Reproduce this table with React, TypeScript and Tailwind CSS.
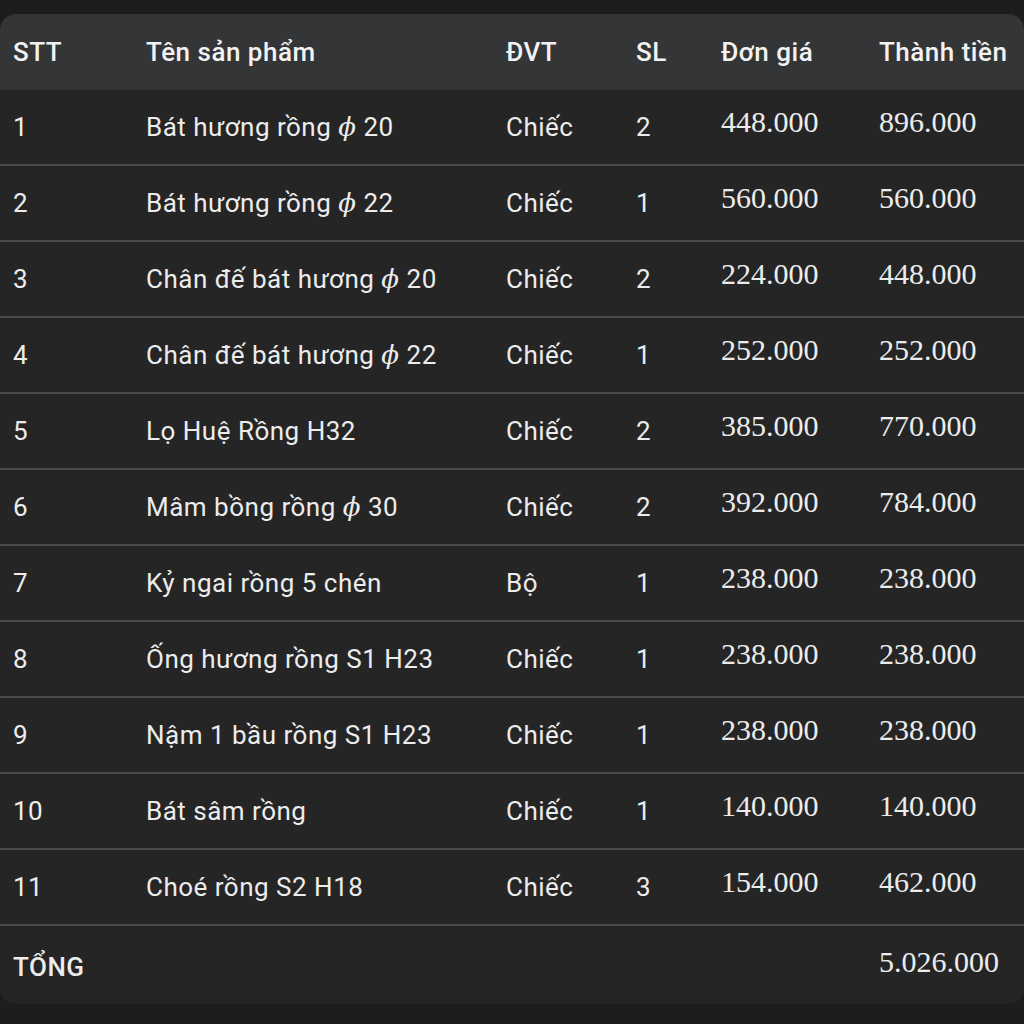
const ROWS = [
  { stt: "1", name: ["Bát hương rồng ", "ϕ", " 20"], unit: "Chiếc", qty: "2", price: "448.000", total: "896.000" },
  { stt: "2", name: ["Bát hương rồng ", "ϕ", " 22"], unit: "Chiếc", qty: "1", price: "560.000", total: "560.000" },
  { stt: "3", name: ["Chân đế bát hương ", "ϕ", " 20"], unit: "Chiếc", qty: "2", price: "224.000", total: "448.000" },
  { stt: "4", name: ["Chân đế bát hương ", "ϕ", " 22"], unit: "Chiếc", qty: "1", price: "252.000", total: "252.000" },
  { stt: "5", name: ["Lọ Huệ Rồng H32"], unit: "Chiếc", qty: "2", price: "385.000", total: "770.000" },
  { stt: "6", name: ["Mâm bồng rồng ", "ϕ", " 30"], unit: "Chiếc", qty: "2", price: "392.000", total: "784.000" },
  { stt: "7", name: ["Kỷ ngai rồng 5 chén"], unit: "Bộ", qty: "1", price: "238.000", total: "238.000" },
  { stt: "8", name: ["Ống hương rồng S1 H23"], unit: "Chiếc", qty: "1", price: "238.000", total: "238.000" },
  { stt: "9", name: ["Nậm 1 bầu rồng S1 H23"], unit: "Chiếc", qty: "1", price: "238.000", total: "238.000" },
  { stt: "10", name: ["Bát sâm rồng"], unit: "Chiếc", qty: "1", price: "140.000", total: "140.000" },
  { stt: "11", name: ["Choé rồng S2 H18"], unit: "Chiếc", qty: "3", price: "154.000", total: "462.000" },
];

const GRID = "grid grid-cols-[133px_360px_130px_85px_158px_1fr] items-center pl-[13px]";
const SERIF = "font-['Liberation_Serif',serif] text-[30px] tracking-normal mb-[12px]";

function Name({ parts }: { parts: string[] }) {
  return (
    <span>
      {parts.map((p, i) =>
        p === "ϕ" ? (
          <span key={i} className="font-['DejaVu_Serif',serif] italic">
            ϕ
          </span>
        ) : (
          <span key={i}>{p}</span>
        )
      )}
    </span>
  );
}

export default function App() {
  return (
    <div className="min-h-[1024px] w-[1024px] bg-[#1c1d1f] pt-[14px] font-['Roboto',sans-serif]">
      <div className="h-[990px] overflow-hidden rounded-2xl bg-[#252526] text-[#ececec]">
        <div className={`${GRID} h-[76px] bg-[#343537] text-[26px] font-medium tracking-[0.5px] text-[#f2f2f2]`}>
          <span>STT</span>
          <span>Tên sản phẩm</span>
          <span>ĐVT</span>
          <span>SL</span>
          <span>Đơn giá</span>
          <span>Thành tiền</span>
        </div>
        {ROWS.map((r) => (
          <div key={r.stt} className={`${GRID} h-[76px] border-b-2 border-[#4a4a4b] text-[26px] tracking-[0.5px]`}>
            <span>{r.stt}</span>
            <Name parts={r.name} />
            <span>{r.unit}</span>
            <span>{r.qty}</span>
            <span className={SERIF}>{r.price}</span>
            <span className={SERIF}>{r.total}</span>
          </div>
        ))}
        <div className={`${GRID} h-[76px] pt-[6px] text-[26px] tracking-[0.5px]`}>
          <span className="font-medium">TỔNG</span>
          <span />
          <span />
          <span />
          <span />
          <span className={SERIF}>5.026.000</span>
        </div>
      </div>
    </div>
  );
}
